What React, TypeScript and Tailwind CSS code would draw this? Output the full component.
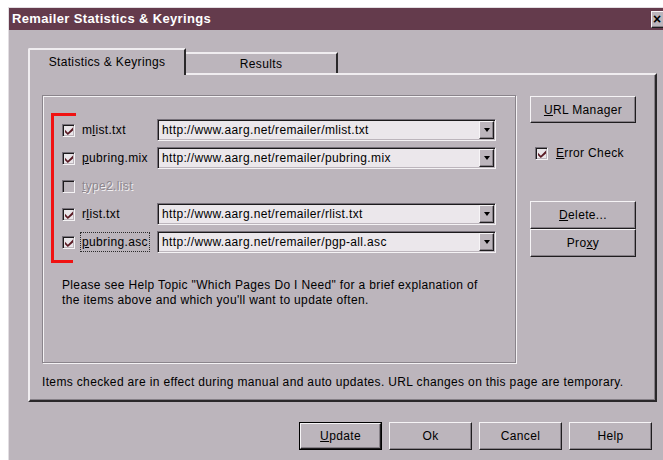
import React from "react";

const raised =
  "border border-t-[#f6f4f6] border-l-[#f6f4f6] border-b-[#1f1d1f] border-r-[#1f1d1f] shadow-[inset_-1px_-1px_0_#878188]";
const sunken =
  "border border-t-[#77717a] border-l-[#77717a] border-b-[#f4f2f4] border-r-[#f4f2f4] shadow-[inset_1px_1px_0_#1c1a1c,inset_-1px_-1px_0_#bcb5bc]";

type Row = {
  label: React.ReactNode;
  url?: string;
  checked: boolean;
  disabled?: boolean;
  focus?: boolean;
};

const ROWS: Row[] = [
  {
    label: (
      <>
        m<u>l</u>ist.txt
      </>
    ),
    url: "http://www.aarg.net/remailer/mlist.txt",
    checked: true,
  },
  {
    label: (
      <>
        <u>p</u>ubring.mix
      </>
    ),
    url: "http://www.aarg.net/remailer/pubring.mix",
    checked: true,
  },
  {
    label: (
      <>
        <u>t</u>ype2.list
      </>
    ),
    checked: false,
    disabled: true,
  },
  {
    label: (
      <>
        r<u>l</u>ist.txt
      </>
    ),
    url: "http://www.aarg.net/remailer/rlist.txt",
    checked: true,
  },
  {
    label: (
      <>
        <u>p</u>ubring.asc
      </>
    ),
    url: "http://www.aarg.net/remailer/pgp-all.asc",
    checked: true,
    focus: true,
  },
];

function Check({ checked, disabled }: { checked: boolean; disabled?: boolean }) {
  return (
    <span
      className={`flex h-[13px] w-[13px] shrink-0 items-center justify-center pl-[1px] pt-[1px] ${sunken} ${
        disabled ? "bg-[#bcb5bc]" : "bg-[#e9e5e9]"
      }`}
    >
      {checked && (
        <svg width="8" height="8" viewBox="0 0 7 7">
          <path d="M0 2.5 L2.5 5 L7 0.5 L7 3 L2.5 7 L0 4.5 Z" fill="#5a1a24" />
        </svg>
      )}
    </span>
  );
}

function Combo({ value }: { value: string }) {
  return (
    <div className={`flex h-[22px] w-[339px] bg-[#ebe7eb] ${sunken}`}>
      <span className="flex-1 pl-[4px] text-[12px] leading-[20px] text-black">
        {value}
      </span>
      <span
        className={`my-[1px] mr-[1px] flex w-[15px] items-center justify-center bg-[#bcb5bc] ${raised}`}
      >
        <span className="h-0 w-0 border-x-[3px] border-t-[4px] border-x-transparent border-t-black" />
      </span>
    </div>
  );
}

function Button({
  children,
  className = "",
  def,
}: {
  children: React.ReactNode;
  className?: string;
  def?: boolean;
}) {
  const btn = (
    <div
      className={`flex h-full w-full items-center justify-center bg-[#bcb5bc] text-[12px] text-black ${raised}`}
    >
      {children}
    </div>
  );
  if (def) {
    return <div className={`border border-black ${className}`}>{btn}</div>;
  }
  return <div className={className}>{btn}</div>;
}

export default function App() {
  return (
    <div className="h-[460px] w-[663px] overflow-hidden bg-white pl-[8px] pt-[7px] font-['Liberation_Sans',Arial,sans-serif] tracking-[0.35px]">
      <div className="h-[460px] w-[663px] border-l border-t border-[#e2dee2] bg-[#bcb5bc]">
        {/* title bar */}
        <div className="flex h-[22px] items-center bg-[#643b4c] pl-[3px] pr-[2px]">
          <span className="text-[13px] font-bold text-white">
            Remailer Statistics &amp; Keyrings
          </span>
          <div className="flex-1" />
          <div
            className={`mr-[2px] flex h-[17px] w-[16px] items-center bg-[#bcb5bc] pl-[1px] text-[14px] font-bold leading-none text-black ${raised}`}
          >
            ×
          </div>
        </div>

        <div className="pl-[19px] pt-[18px]">
          {/* tabs */}
          <div className="flex h-[25px] items-end">
            <div className="relative z-10 -mb-[2px] flex h-[27px] w-[158px] items-start justify-center rounded-tl-[2px] border-l-2 border-t-2 border-r-2 border-l-[#f0edf0] border-t-[#f0edf0] border-r-[#2a282a] bg-[#bcb5bc] pt-[3px] text-[12px] text-black">
              Statistics &amp; Keyrings
            </div>
            <div className="flex h-[21px] w-[152px] items-center justify-center border-t-2 border-r-2 border-t-[#f0edf0] border-r-[#2a282a] text-[12px] text-black">
              Results
            </div>
          </div>

          {/* panel */}
          <div className="h-[329px] w-[629px] border-2 border-t-[#f0edf0] border-l-[#f0edf0] border-r-[#2a282a] border-b-[#2a282a] pl-[12px] pt-[20px] shadow-[inset_-1px_-1px_0_#857f86]">
            <div className="flex">
              {/* group box */}
              <div className="h-[268px] w-[474px] border border-[#8a848b] pl-[8px] pt-[17px] shadow-[inset_1px_1px_0_#f4f2f4,1px_1px_0_#f4f2f4]">
                <div className="flex flex-col">
                  <div className="h-[3px] w-[25px] bg-[#f01212]" />
                  <div className="border-l-[3px] border-[#f01212] pb-[4px] pl-[8px]">
                    {ROWS.map((r, i) => (
                      <div key={i} className="flex h-[28px] items-center">
                        <div className="flex w-[95px] items-center gap-[7px]">
                          <Check checked={r.checked} disabled={r.disabled} />
                          <span
                            className={`text-[12px] leading-[18px] ${
                              r.disabled
                                ? "text-[#8d878e] [text-shadow:1px_1px_0_#f2f0f2]"
                                : "text-black"
                            } ${
                              r.focus
                                ? "-ml-[2px] border border-dotted border-[#2a2a2a] px-[1px]"
                                : ""
                            }`}
                          >
                            {r.label}
                          </span>
                        </div>
                        {r.url && <Combo value={r.url} />}
                      </div>
                    ))}
                  </div>
                  <div className="h-[3px] w-[22px] bg-[#f01212]" />
                </div>
                <p className="mt-[15px] pl-[11px] text-[12px] leading-[15px] text-black">
                  Please see Help Topic "Which Pages Do I Need" for a brief
                  explanation of
                  <br />
                  the items above and which you'll want to update often.
                </p>
              </div>

              {/* right column */}
              <div className="ml-[14px] flex w-[106px] flex-col pt-[1px]">
                <Button className="h-[27px]">
                  <span>
                    <u>U</u>RL Manager
                  </span>
                </Button>
                <div className="mt-[21px] flex items-center gap-[8px] pl-[5px]">
                  <Check checked />
                  <span className="text-[12px] text-black">
                    <u>E</u>rror Check
                  </span>
                </div>
                <Button className="mt-[39px] h-[28px]">
                  <span>
                    <u>D</u>elete...
                  </span>
                </Button>
                <Button className="h-[28px]">
                  <span>
                    Pro<u>x</u>y
                  </span>
                </Button>
              </div>
            </div>
            <p className="mt-[12px] text-[12px] leading-[15px] text-black">
              Items checked are in effect during manual and auto updates. URL
              changes on this page are temporary.
            </p>
          </div>

          {/* dialog buttons */}
          <div className="mt-[20px] flex gap-[7px] pl-[271px]">
            <Button def className="h-[28px] w-[83px]">
              <span>
                <u>U</u>pdate
              </span>
            </Button>
            <Button className="h-[28px] w-[83px]">Ok</Button>
            <Button className="h-[28px] w-[83px]">Cancel</Button>
            <Button className="h-[28px] w-[83px]">Help</Button>
          </div>
        </div>
      </div>
    </div>
  );
}
